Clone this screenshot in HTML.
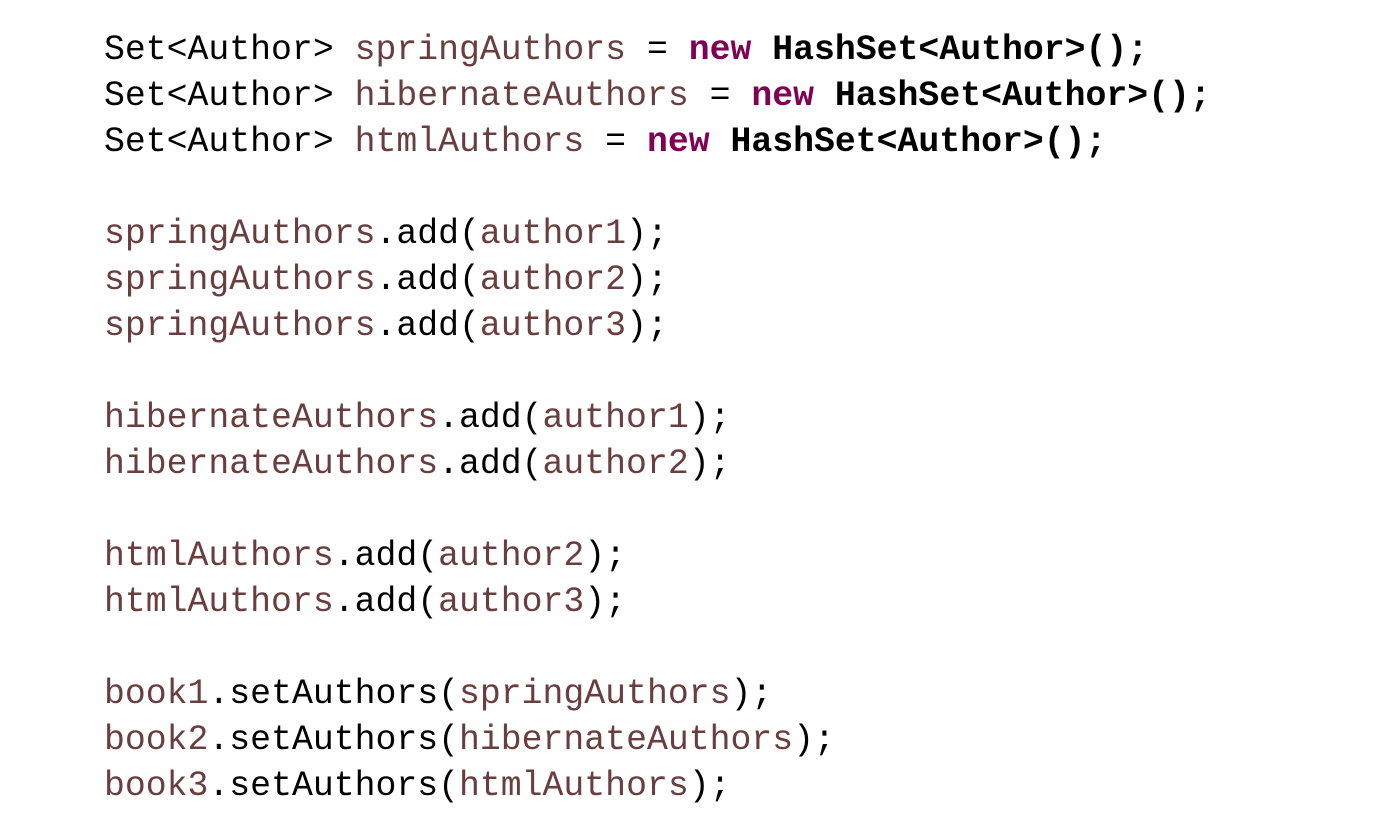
<!DOCTYPE html>
<html><head><meta charset="utf-8"><style>
html,body{margin:0;padding:0;background:#fff;width:1398px;height:840px;overflow:hidden}
pre{position:absolute;left:104px;top:28px;margin:0;font-family:"Liberation Mono",monospace;font-size:34.8px;line-height:46px;color:#000}
.v{color:#6a3e3e}.k{color:#7f0055;font-weight:bold}.b{font-weight:bold}
</style></head><body><pre>Set&lt;Author&gt; <span class="v">springAuthors</span> = <span class="k">new</span> <span class="b">HashSet&lt;Author&gt;();</span>
Set&lt;Author&gt; <span class="v">hibernateAuthors</span> = <span class="k">new</span> <span class="b">HashSet&lt;Author&gt;();</span>
Set&lt;Author&gt; <span class="v">htmlAuthors</span> = <span class="k">new</span> <span class="b">HashSet&lt;Author&gt;();</span>

<span class="v">springAuthors</span>.add(<span class="v">author1</span>);
<span class="v">springAuthors</span>.add(<span class="v">author2</span>);
<span class="v">springAuthors</span>.add(<span class="v">author3</span>);

<span class="v">hibernateAuthors</span>.add(<span class="v">author1</span>);
<span class="v">hibernateAuthors</span>.add(<span class="v">author2</span>);

<span class="v">htmlAuthors</span>.add(<span class="v">author2</span>);
<span class="v">htmlAuthors</span>.add(<span class="v">author3</span>);

<span class="v">book1</span>.setAuthors(<span class="v">springAuthors</span>);
<span class="v">book2</span>.setAuthors(<span class="v">hibernateAuthors</span>);
<span class="v">book3</span>.setAuthors(<span class="v">htmlAuthors</span>);</pre></body></html>
